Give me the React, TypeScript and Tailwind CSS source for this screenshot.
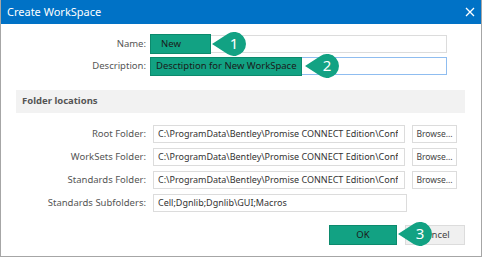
import React from "react";

const font = { fontFamily: '"Noto Sans", "Open Sans", sans-serif' };

const Callout = ({ n, left, top }: { n: number; left: number; top: number }) => (
  <div className="absolute" style={{ left, top }}>
    <svg width="34" height="24" viewBox="0 0 34 24">
      <path d="M0 12 L15.5 1.9 A12 12 0 1 1 15.5 22.1 Z" fill="#12a283" />
      <text x="22" y="17" textAnchor="middle" fill="#fff" fontSize="15" fontFamily="Noto Sans, sans-serif">
        {n}
      </text>
    </svg>
  </div>
);

const FolderRow = ({ label, value, browse = true, wide = false }: { label: string; value: string; browse?: boolean; wide?: boolean }) => (
  <div className="flex items-center h-[18px]">
    <div className="w-[145px] text-right text-[9.5px] text-[#555]">{label}</div>
    <div
      className={`ml-[7px] h-[18px] border border-[#dcdcdc] pl-[4px] flex items-center overflow-hidden whitespace-nowrap text-[9px] text-[#333] ${
        wide ? "w-[254px]" : "w-[252px]"
      }`}
    >
      <span className="block overflow-hidden">{value}</span>
    </div>
    {browse && (
      <div className="ml-[7px] w-[45px] h-[18px] border border-[#dcdcdc] flex items-center justify-center text-[8.5px] text-[#444]">
        Browse...
      </div>
    )}
  </div>
);

export default function App() {
  const path = "C:\\ProgramData\\Bentley\\Promise CONNECT Edition\\Conf";
  return (
    <div className="relative w-[482px] h-[257px] bg-white border-x border-b border-[#a6a6a6] overflow-hidden" style={font}>
      <div className="h-[24px] bg-[#0072c6] flex items-center justify-between pl-[6px] pr-[6px] text-white">
        <span className="text-[11px]">Create WorkSpace</span>
        <svg width="10" height="10" viewBox="0 0 10 10">
          <path d="M1 1 L9 9 M9 1 L1 9" stroke="#fff" strokeWidth="1.3" />
        </svg>
      </div>

      <div className="pt-[11px] flex flex-col gap-[4px]">
        <div className="flex items-center h-[18px]">
          <div className="w-[145px] text-right text-[9.5px] text-[#555]">Name:</div>
          <div className="ml-[4px] w-[297px] h-[18px] border border-[#dcdcdc] flex items-center">
            <div className="w-[61px] h-[20px] -ml-px bg-[#12a283] border border-[#0c8a6d] flex items-center pl-[10px] text-[9.5px] text-[#1a1a1a]">
              New
            </div>
          </div>
        </div>
        <div className="flex items-center h-[18px]">
          <div className="w-[145px] text-right text-[9.5px] text-[#555]">Description:</div>
          <div className="ml-[4px] w-[297px] h-[18px] border border-[#8fbdf0] flex items-center">
            <div className="w-[152px] h-[19px] -ml-px bg-[#12a283] border border-[#0c8a6d] flex items-center pl-[5px] text-[9.5px] text-[#1a1a1a] whitespace-nowrap">
              Desctiption for New WorkSpace
            </div>
          </div>
        </div>
      </div>

      <div className="mt-[15px] ml-[15px] w-[449px] h-[23px] bg-[#f2f2f2] flex items-center pl-[6px] text-[9.5px] font-bold text-[#555]">
        Folder locations
      </div>

      <div className="mt-[12px] flex flex-col gap-[5px]">
        <FolderRow label="Root Folder:" value={path} />
        <FolderRow label="WorkSets Folder:" value={path} />
        <FolderRow label="Standards Folder:" value={path} />
        <FolderRow label="Standards Subfolders:" value="Cell;Dgnlib;Dgnlib\GUI;Macros" browse={false} wide />
      </div>

      <div className="mt-[13px] flex justify-end gap-[8px] pr-[16px]">
        <div className="w-[68px] h-[20px] bg-[#12a283] border border-[#0c8a6d] flex items-center justify-center text-[9.5px] text-[#1a1a1a]">
          OK
        </div>
        <div className="w-[60px] h-[20px] bg-[#f0f0f0] border border-[#dcdcdc] flex items-center justify-center text-[9.5px] text-[#444]">
          Cancel
        </div>
      </div>

      <Callout n={1} left={211} top={32} />
      <Callout n={2} left={304} top={54} />
      <Callout n={3} left={397} top={222} />
    </div>
  );
}
